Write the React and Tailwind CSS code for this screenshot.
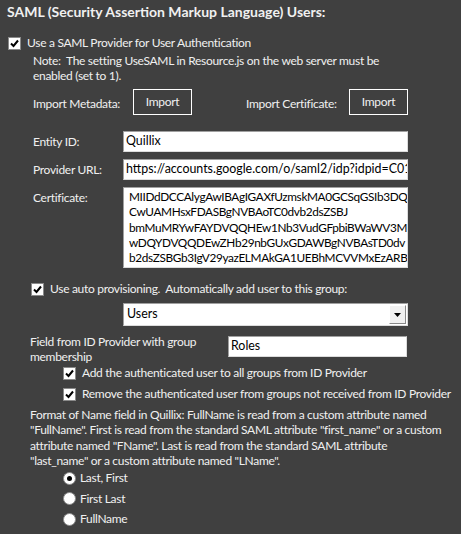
import React from 'react';

const font = { fontFamily: 'Lato, "Noto Sans", sans-serif' };

function Check({ checked = true }) {
  return (
    <div className="w-[13px] h-[13px] bg-white border border-[#8a8a8a] flex items-center justify-center shrink-0">
      {checked && (
        <svg width="9" height="9" viewBox="0 0 9 9">
          <path d="M1 4.5 L3.5 7 L8 1.5" stroke="#000" strokeWidth="2" fill="none" />
        </svg>
      )}
    </div>
  );
}

function Radio({ checked }) {
  return (
    <div className="w-[13px] h-[13px] rounded-full bg-white border border-[#8a8a8a] flex items-center justify-center shrink-0">
      {checked && <div className="w-[5px] h-[5px] rounded-full bg-black" />}
    </div>
  );
}

function TextBox({ value, className = '' }) {
  return (
    <div className={`h-[21px] bg-white border border-t-[#a0a0a0] border-l-[#a0a0a0] border-b-[#dcdcdc] border-r-[#dcdcdc] text-black text-[12.4px] tracking-normal leading-[18px] pl-[2px] overflow-hidden whitespace-nowrap ${className}`}>
      {value}
    </div>
  );
}

function ImportButton() {
  return (
    <div className="w-[59px] h-[26px] border border-white flex justify-center pt-[3px] shrink-0">Import</div>
  );
}

const certLines = [
  'MIIDdDCCAlygAwIBAgIGAXfUzmskMA0GCSqGSIb3DQEBCwUA',
  'CwUAMHsxFDASBgNVBAoTC0dvb2dsZSBJ',
  'bmMuMRYwFAYDVQQHEw1Nb3VudGFpbiBWaWV3MQ8wDQYD',
  'wDQYDVQQDEwZHb29nbGUxGDAWBgNVBAsTD0dv',
  'b2dsZSBGb3IgV29yazELMAkGA1UEBhMCVVMxEzARBgNV',
];

const formatLines = [
  'Format of Name field in Quillix: FullName is read from a custom attribute named',
  '"FullName". First is read from the standard SAML attribute "first_name" or a custom',
  'attribute named "FName". Last is read from the standard SAML attribute',
  '"last_name" or a custom attribute named "LName".',
];

export default function App() {
  return (
    <div className="w-[461px] h-[534px] bg-[#404040] text-[#f0f0f0] text-[12px] tracking-[-0.3px] overflow-hidden" style={font}>
      <div className="pl-[7px] pt-[2px] h-[24px] font-bold text-[14px] tracking-normal leading-[20px]">
        SAML (Security Assertion Markup Language) Users:
      </div>

      <div className="flex items-center gap-[6px] pl-[8px] mt-[12px] h-[14px]">
        <Check />
        <span className="leading-[14px]">Use a SAML Provider for User Authentication</span>
      </div>

      <div className="pl-[33px] mt-[3px] leading-[15px]">
        <div>Note:&nbsp; The setting UseSAML in Resource.js on the web server must be</div>
        <div>enabled (set to 1).</div>
      </div>

      <div className="flex items-center pl-[33px] mt-[6px] h-[26px]">
        <span className="w-[100px] pt-[3px] whitespace-nowrap">Import Metadata:</span>
        <ImportButton />
        <span className="ml-[54px] w-[103px] pt-[3px] whitespace-nowrap">Import Certificate:</span>
        <ImportButton />
      </div>

      <div className="flex items-center pl-[33px] mt-[16px]">
        <span className="w-[90px]">Entity ID:</span>
        <TextBox value="Quillix" className="w-[285px]" />
      </div>

      <div className="flex items-center pl-[33px] mt-[7px]">
        <span className="w-[90px]">Provider URL:</span>
        <TextBox value="https://accounts.google.com/o/saml2/idp?idpid=C019xyz" className="w-[285px]" />
      </div>

      <div className="flex items-start pl-[33px] mt-[7px]">
        <span className="w-[90px] pt-[2px]">Certificate:</span>
        <div className="w-[285px] h-[81px] bg-white border border-t-[#a0a0a0] border-l-[#a0a0a0] border-b-[#dcdcdc] border-r-[#dcdcdc] text-black text-[11.8px] tracking-[-0.35px] leading-[15.3px] pl-[5px] pt-[1px] overflow-hidden">
          {certLines.map((l) => (
            <div key={l} className="whitespace-nowrap">{l}</div>
          ))}
        </div>
      </div>

      <div className="flex items-center gap-[6px] pl-[31px] mt-[14px] h-[14px]">
        <Check />
        <span className="whitespace-nowrap">Use auto provisioning.&nbsp; Automatically add user to this group:</span>
      </div>

      <div className="pl-[123px] mt-[7px]">
        <div className="w-[285px] h-[23px] bg-white border border-t-[#a0a0a0] border-l-[#a0a0a0] border-b-[#dcdcdc] border-r-[#dcdcdc] flex items-center justify-between text-black text-[12.4px] tracking-normal">
          <span className="pl-[3px]">Users</span>
          <div className="w-[17px] h-[19px] mr-[1px] bg-[#f0f0f0] border border-t-white border-l-white border-b-[#888] border-r-[#888] flex items-center justify-center">
            <svg width="7" height="4" viewBox="0 0 7 4"><path d="M0 0 H7 L3.5 4 Z" fill="#000" /></svg>
          </div>
        </div>
      </div>

      <div className="flex items-start pl-[30px] mt-[10px] h-[30px]">
        <div className="w-[198px] leading-[15px] mt-[-2px] whitespace-nowrap">
          <div>Field from ID Provider with group</div>
          <div>membership</div>
        </div>
        <TextBox value="Roles" className="w-[179px]" />
      </div>

      <div className="flex items-center gap-[6px] pl-[63px] mt-[0px] h-[14px]">
        <Check />
        <span className="whitespace-nowrap">Add the authenticated user to all groups from ID Provider</span>
      </div>

      <div className="flex items-center gap-[6px] pl-[63px] mt-[7px] h-[14px]">
        <Check />
        <span className="whitespace-nowrap">Remove the authenticated user from groups not received from ID Provider</span>
      </div>

      <div className="pl-[30px] mt-[6px] leading-[15.4px]">
        {formatLines.map((l) => (
          <div key={l} className="whitespace-nowrap">{l}</div>
        ))}
      </div>

      <div className="pl-[63px] mt-[3px] flex flex-col gap-[7.5px]">
        {['Last, First', 'First Last', 'FullName'].map((l, i) => (
          <div key={l} className="flex items-center gap-[4px] h-[13px]">
            <Radio checked={i === 0} />
            <span>{l}</span>
          </div>
        ))}
      </div>
    </div>
  );
}
